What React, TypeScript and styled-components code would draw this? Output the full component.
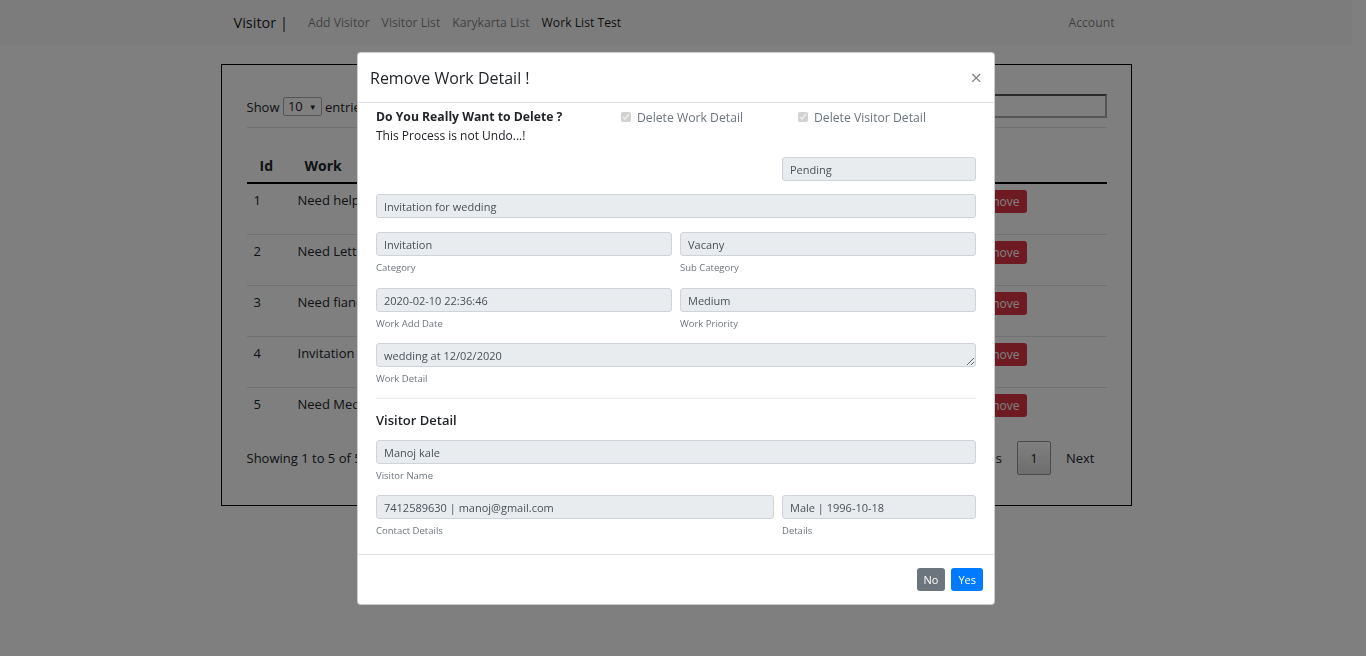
import React from "react";
import styled, { createGlobalStyle } from "styled-components";

const GlobalStyle = createGlobalStyle`
  * { box-sizing: border-box; }
  body {
    margin: 0;
    font-family: "Open Sans", "Noto Sans", sans-serif;
    color: #212529;
    background: #fff;
  }
`;

const rows = [
  { id: 1, work: "Need help for admission in college" },
  { id: 2, work: "Need Letter for passport verification" },
  { id: 3, work: "Need fiance for business startup" },
  { id: 4, work: "Invitation for wedding" },
  { id: 5, work: "Need Medical help for father" },
];

export default function App() {
  return (
    <>
      <GlobalStyle />
      <Page>
        <Navbar>
          <NavInner>
            <Brand>Visitor |</Brand>
            <NavLink>Add Visitor</NavLink>
            <NavLink>Visitor List</NavLink>
            <NavLink>Karykarta List</NavLink>
            <NavLink $active>Work List Test</NavLink>
            <NavSpacer />
            <NavLink>Account</NavLink>
          </NavInner>
        </Navbar>

        <ListCard>
          <TableTop>
            <span>
              Show <FakeSelect>10 <small>▼</small></FakeSelect> entries
            </span>
            <SearchInput />
          </TableTop>
          <Divider />
          <Table>
            <thead>
              <tr>
                <Th $pl={13} $w={42}>Id</Th>
                <Th $pl={16}>Work</Th>
                <Th $pl={10}>Status</Th>
                <Th $pl={8} $w={175}>Action</Th>
              </tr>
            </thead>
            <tbody>
              {rows.map((r) => (
                <tr key={r.id}>
                  <Td $pl={7}>{r.id}</Td>
                  <Td $pl={9}>{r.work}</Td>
                  <Td $pl={10}>Pending</Td>
                  <ActionCell>
                    <RemoveButton>Remove</RemoveButton>
                  </ActionCell>
                </tr>
              ))}
            </tbody>
          </Table>
          <TableFoot>
            <span>Showing 1 to 5 of 5 entries</span>
            <Pager>
              <span>Previous</span>
              <PageBox>1</PageBox>
              <span>Next</span>
            </Pager>
          </TableFoot>
        </ListCard>

        <Overlay />

        <Modal>
          <ModalHeader>
            <ModalTitle>Remove Work Detail !</ModalTitle>
            <CloseButton>×</CloseButton>
          </ModalHeader>
          <ModalBody>
            <ConfirmRow>
              <div>
                <Question>Do You Really Want to Delete ?</Question>
                <Warning>This Process is not Undo...!</Warning>
              </div>
              <CheckLabel>
                <Check type="checkbox" checked disabled readOnly />
                Delete Work Detail
              </CheckLabel>
              <CheckLabel>
                <Check type="checkbox" checked disabled readOnly />
                Delete Visitor Detail
              </CheckLabel>
            </ConfirmRow>

            <FieldRow $cols="398px 194px" $mt={12}>
              <div />
              <Input readOnly value="Pending" />
            </FieldRow>
            <FieldRow $cols="1fr" $mt={13}>
              <Input readOnly value="Invitation for wedding" />
            </FieldRow>
            <FieldRow $cols="1fr 1fr" $mt={14}>
              <div>
                <Input readOnly value="Invitation" />
                <Hint>Category</Hint>
              </div>
              <div>
                <Input readOnly value="Vacany" />
                <Hint>Sub Category</Hint>
              </div>
            </FieldRow>
            <FieldRow $cols="1fr 1fr" $mt={13}>
              <div>
                <Input readOnly value="2020-02-10 22:36:46" />
                <Hint>Work Add Date</Hint>
              </div>
              <div>
                <Input readOnly value="Medium" />
                <Hint>Work Priority</Hint>
              </div>
            </FieldRow>
            <FieldRow $cols="1fr" $mt={12}>
              <div>
                <TextArea readOnly rows={1} value="wedding at 12/02/2020" />
                <Hint>Work Detail</Hint>
              </div>
            </FieldRow>

            <SectionRule />
            <SectionTitle>Visitor Detail</SectionTitle>

            <FieldRow $cols="1fr" $mt={10}>
              <div>
                <Input readOnly value="Manoj kale" />
                <Hint>Visitor Name</Hint>
              </div>
            </FieldRow>
            <FieldRow $cols="398px 194px" $mt={12}>
              <div>
                <Input readOnly value="7412589630 | manoj@gmail.com" />
                <Hint>Contact Details</Hint>
              </div>
              <div>
                <Input readOnly value="Male | 1996-10-18" />
                <Hint>Details</Hint>
              </div>
            </FieldRow>
          </ModalBody>
          <ModalFooter>
            <SmallButton $bg="#6c757d">No</SmallButton>
            <SmallButton $bg="#007bff">Yes</SmallButton>
          </ModalFooter>
        </Modal>
      </Page>
    </>
  );
}

const Page = styled.div`
  position: relative;
  width: 1352px;
  min-height: 656px;
`;

const Navbar = styled.nav`
  height: 45px;
  background: #f8f9fa;
`;

const NavInner = styled.div`
  width: 911px;
  height: 100%;
  margin: 0 auto;
  padding: 0 17px 0 13px;
  display: flex;
  align-items: center;
  gap: 12px;
`;

const Brand = styled.span`
  font-size: 14.5px;
  color: rgba(0, 0, 0, 0.9);
  margin-right: 8px;
`;

const NavLink = styled.span<{ $active?: boolean }>`
  font-size: 12.2px;
  color: ${(p) => (p.$active ? "rgba(0,0,0,0.9)" : "rgba(0,0,0,0.5)")};
`;

const NavSpacer = styled.div`
  flex: 1;
`;

const ListCard = styled.div`
  width: 911px;
  height: 442px;
  margin: 19px auto 0;
  border: 1px solid #000;
  padding: 29px 24px 0 25px;
  font-size: 13px;
`;

const TableTop = styled.div`
  height: 24px;
  display: flex;
  align-items: center;
  justify-content: space-between;
`;

const FakeSelect = styled.span`
  display: inline-flex;
  align-items: center;
  gap: 6px;
  height: 19px;
  padding: 0 4px;
  border: 1px solid #aaa;
  border-radius: 2px;
  small {
    font-size: 8px;
  }
`;

const SearchInput = styled.div`
  width: 160px;
  height: 24px;
  border: 2px solid #aaa;
  border-top-color: #555;
`;

const Divider = styled.div`
  height: 1px;
  margin-top: 9px;
  background: #dee2e6;
`;

const Table = styled.table`
  width: 100%;
  margin-top: 20px;
  border-collapse: collapse;
`;

const Th = styled.th<{ $pl: number; $w?: number }>`
  height: 35px;
  width: ${(p) => (p.$w ? `${p.$w}px` : "auto")};
  text-align: left;
  font-size: 14px;
  font-weight: 700;
  padding: 0 0 0 ${(p) => p.$pl}px;
  border-bottom: 2px solid #000;
`;

const Td = styled.td<{ $pl: number }>`
  height: 51px;
  vertical-align: top;
  padding: 6px 0 0 ${(p) => p.$pl}px;
  line-height: 20px;
  border-bottom: 1px solid #dee2e6;
  tr:last-child & {
    border-bottom: none;
  }
`;

const ActionCell = styled(Td).attrs({ $pl: 0 })`
  text-align: right;
  padding-right: 80px;
`;

const RemoveButton = styled.span`
  display: inline-block;
  padding: 0 7px;
  height: 23px;
  line-height: 23px;
  color: #fff;
  background: #dc3545;
  border-radius: 3px;
  font-size: 12px;
`;

const TableFoot = styled.div`
  margin-top: 3px;
  height: 34px;
  display: flex;
  align-items: center;
  justify-content: space-between;
`;

const Pager = styled.div`
  display: flex;
  align-items: center;
  gap: 15px;
  margin-right: 12px;
`;

const PageBox = styled.span`
  width: 34px;
  height: 34px;
  display: flex;
  align-items: center;
  justify-content: center;
  border: 1px solid #979797;
  border-radius: 2px;
  background: linear-gradient(#fff, #dcdcdc);
`;

const Overlay = styled.div`
  position: fixed;
  inset: 0;
  background: rgba(0, 0, 0, 0.5);
`;

const Modal = styled.div`
  position: absolute;
  top: 52px;
  left: calc(50% - 319px);
  width: 638px;
  background: #fff;
  border: 1px solid rgba(0, 0, 0, 0.2);
  border-radius: 4px;
`;

const ModalHeader = styled.div`
  height: 50px;
  padding: 0 12px 0 12px;
  display: flex;
  align-items: center;
  justify-content: space-between;
  border-bottom: 1px solid #dee2e6;
`;

const ModalTitle = styled.h5`
  margin: 0;
  font-size: 16px;
  font-weight: 500;
  color: #212529;
`;

const CloseButton = styled.span`
  font-size: 20px;
  line-height: 1;
  color: #000;
  opacity: 0.5;
`;

const ModalBody = styled.div`
  padding: 5px 18px 16px;
`;

const ConfirmRow = styled.div`
  display: grid;
  grid-template-columns: 245px 177px auto;
  align-items: start;
`;

const Question = styled.div`
  font-size: 12.2px;
  font-weight: 700;
  line-height: 18px;
`;

const Warning = styled.div`
  font-size: 12px;
  line-height: 18px;
  margin-top: 1px;
`;

const CheckLabel = styled.label`
  display: flex;
  align-items: center;
  gap: 6px;
  height: 18px;
  font-size: 12.2px;
  color: #6c757d;
`;

const Check = styled.input`
  width: 10px;
  height: 10px;
  margin: 0;
`;

const FieldRow = styled.div<{ $cols: string; $mt: number }>`
  display: grid;
  grid-template-columns: ${(p) => p.$cols};
  column-gap: 8px;
  margin-top: ${(p) => p.$mt}px;
`;

const Input = styled.input`
  display: block;
  width: 100%;
  height: 24px;
  padding: 0 7px;
  border: 1px solid #ced4da;
  border-radius: 3px;
  background: #e9ecef;
  color: #495057;
  font-family: inherit;
  font-size: 11px;
  outline: none;
`;

const TextArea = styled.textarea`
  display: block;
  width: 100%;
  height: 24px;
  min-height: 24px;
  padding: 4px 7px 0;
  border: 1px solid #ced4da;
  border-radius: 3px;
  background: #e9ecef;
  color: #495057;
  font-family: inherit;
  font-size: 11px;
  line-height: 15px;
  resize: vertical;
  overflow: hidden;
  outline: none;
`;

const Hint = styled.small`
  display: block;
  margin-top: 4px;
  font-size: 9.5px;
  line-height: 15px;
  color: #6c757d;
`;

const SectionRule = styled.hr`
  margin: 12px 0 0;
  border: 0;
  border-top: 1px solid #e9ecef;
`;

const SectionTitle = styled.div`
  margin-top: 11px;
  font-size: 13px;
  font-weight: 600;
  line-height: 20px;
`;

const ModalFooter = styled.div`
  height: 50px;
  padding: 0 11px;
  display: flex;
  align-items: center;
  justify-content: flex-end;
  gap: 6px;
  border-top: 1px solid #dee2e6;
`;

const SmallButton = styled.span<{ $bg: string }>`
  height: 23px;
  padding: 0 7px;
  display: inline-flex;
  align-items: center;
  background: ${(p) => p.$bg};
  color: #fff;
  border-radius: 3px;
  font-size: 11px;
`;
